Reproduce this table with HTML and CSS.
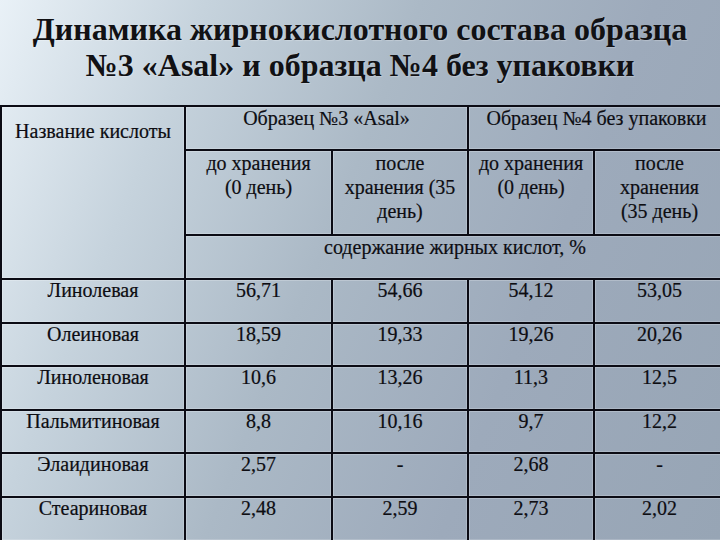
FILE: index.html
```html
<!DOCTYPE html>
<html lang="ru">
<head>
<meta charset="utf-8">
<title>Динамика жирнокислотного состава</title>
<link rel="stylesheet" href="styles.css">
</head>
<body>
<div class="slide">
  <h1 class="title">Динамика жирнокислотного состава образца<br>№3 «Asal» и образца №4 без упаковки</h1>
  <table class="data">
    <colgroup>
      <col class="c-name">
      <col class="c-a">
      <col class="c-b">
      <col class="c-c">
      <col class="c-d">
    </colgroup>
    <tr class="h1">
      <td class="name-head" rowspan="3">Название кислоты</td>
      <td colspan="2">Образец №3 «Asal»</td>
      <td colspan="2">Образец №4 без упаковки</td>
    </tr>
    <tr class="h2">
      <td>до хранения<br>(0 день)</td>
      <td>после<br>хранения (35<br>день)</td>
      <td>до хранения<br>(0 день)</td>
      <td>после<br>хранения<br>(35 день)</td>
    </tr>
    <tr class="h3">
      <td colspan="4">содержание жирных кислот, %</td>
    </tr>
    <tr class="row"><td>Линолевая</td><td>56,71</td><td>54,66</td><td>54,12</td><td>53,05</td></tr>
    <tr class="row"><td>Олеиновая</td><td>18,59</td><td>19,33</td><td>19,26</td><td>20,26</td></tr>
    <tr class="row"><td>Линоленовая</td><td>10,6</td><td>13,26</td><td>11,3</td><td>12,5</td></tr>
    <tr class="row"><td>Пальмитиновая</td><td>8,8</td><td>10,16</td><td>9,7</td><td>12,2</td></tr>
    <tr class="row"><td>Элаидиновая</td><td>2,57</td><td>-</td><td>2,68</td><td>-</td></tr>
    <tr class="row"><td>Стеариновая</td><td>2,48</td><td>2,59</td><td>2,73</td><td>2,02</td></tr>
  </table>
</div>
</body>
</html>
```
FILE: styles.css
```css
html, body {
  margin: 0;
  padding: 0;
  width: 720px;
  height: 540px;
  overflow: hidden;
}
body {
  background: linear-gradient(112deg, #e9f1f7 0%, #c6d3dd 22%, #abb9c6 45%, #9daabb 70%, #97a5b5 100%);
  font-family: "Liberation Serif", Tinos, "Times New Roman", "DejaVu Serif", serif;
  color: #0d0d12;
}
.slide {
  width: 720px;
  height: 540px;
  overflow: hidden;
}
.title {
  margin: 0;
  padding-top: 11px;
  height: 95px;
  box-sizing: border-box;
  text-align: center;
  font-family: "Liberation Serif", Tinos, "Times New Roman", "DejaVu Serif", serif;
  font-size: 32px;
  line-height: 36px;
  font-weight: bold;
  color: #111114;
  text-shadow: 1px 1px 1px rgba(255, 255, 255, 0.25);
}
.data {
  margin-top: 10px;
  border-collapse: collapse;
  table-layout: fixed;
  width: 724px;
  font-family: "Liberation Serif", Tinos, "Times New Roman", "DejaVu Serif", serif;
  font-size: 20px;
  line-height: 24px;
  -webkit-text-stroke: 0.2px #0d0d12;
}
.c-name { width: 184px; }
.c-a { width: 147px; }
.c-b { width: 136px; }
.c-c { width: 126px; }
.c-d { width: 131px; }
.data td {
  box-sizing: border-box;
  border: 2px solid #0b0b14;
  text-align: center;
  vertical-align: top;
  padding: 0 2px;
  box-shadow: inset 1px 1px 0 rgba(255, 255, 255, 0.22), inset -1px -1px 0 rgba(255, 255, 255, 0.18);
}
.h1 td { height: 44px; line-height: 22px; }
.data td.name-head {
  padding-top: 13px;
  line-height: 22px;
}
.h2 td { height: 85px; }
.h3 td { height: 44px; line-height: 22px; }
.row td { height: 43.6px; line-height: 20px; }
```
